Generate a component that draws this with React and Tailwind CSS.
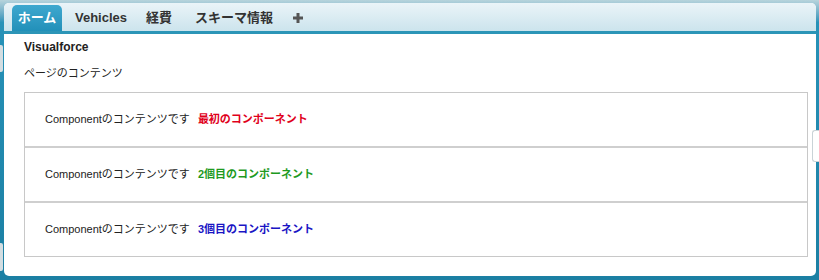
const tabs = ['Vehicles', '経費', 'スキーマ情報'];
const tabGaps = ['ml-[13px]', 'ml-[19px]', 'ml-[23px]'];

const components = [
  { label: '最初のコンポーネント', color: 'text-[#e0001b]' },
  { label: '2個目のコンポーネント', color: 'text-[#1f9a1f]' },
  { label: '3個目のコンポーネント', color: 'text-[#1a14c4]' },
];

function ComponentRow({ label, color, first }) {
  return (
    <div className={`flex items-center pl-[20px] text-[11px] text-[#222] ${first ? 'h-[53px]' : 'h-[55px] border-t-2 border-[#cfcfcf]'}`}>
      <span>Componentのコンテンツです</span>
      <span className={`ml-[8px] font-bold ${color}`}>{label}</span>
    </div>
  );
}

export default function App() {
  return (
    <div className="relative h-[280px] w-[819px] overflow-hidden bg-gradient-to-b from-[#b7d4dc] via-[#2792b8] via-[8%] to-[#1b7fa3] pt-[3px] pl-[4px] pr-[3px] font-['Liberation_Sans','Noto_Sans_CJK_JP',sans-serif]">
      <div className="h-[273px] rounded-[5px] bg-white flex flex-col overflow-hidden">
        {/* tab bar */}
        <div className="h-[31px] shrink-0 flex items-end pl-[8px] bg-gradient-to-b from-[#eaf4f8] to-[#cce4ed] border-b-[3px] border-[#2c95b7]">
          <div className="w-[50px] h-[26px] rounded-t-[5px] bg-gradient-to-b from-[#3ea8cf] to-[#2190b9] flex items-center justify-center text-[13px] font-bold text-white">
            ホーム
          </div>
          {tabs.map((t, i) => (
            <div key={t} className={`${tabGaps[i]} h-[26px] flex items-center text-[13px] font-bold text-[#333]`}>
              {t}
            </div>
          ))}
          <div className="ml-[20px] h-[26px] flex items-center">
            <svg width="10" height="10" viewBox="0 0 10 10">
              <path d="M3.5 0h3v3.5H10v3H6.5V10h-3V6.5H0v-3h3.5z" fill="#555" />
            </svg>
          </div>
        </div>

        {/* content */}
        <div className="pl-[20px] pr-[8px] pt-[6px]">
          <div className="text-[12px] leading-[14px] font-bold text-[#222]">Visualforce</div>
          <div className="mt-[12px] text-[11px] leading-[14px] text-[#222]">ページのコンテンツ</div>
          <div className="mt-[12px] border border-[#c8c8c8]">
            {components.map((c, i) => (
              <ComponentRow key={c.label} label={c.label} color={c.color} first={i === 0} />
            ))}
          </div>
        </div>
      </div>

      {/* sidebar handles */}
      <div className="absolute left-0 top-[45px] w-[3px] h-[27px] rounded-r-[2px] bg-[#d3dde1]" />
      <div className="absolute left-0 top-[243px] w-[3px] h-[28px] rounded-r-[2px] bg-[#d3dde1]" />
      <div className="absolute right-0 top-[130px] w-[7px] h-[32px] rounded-l-[3px] bg-white border border-r-0 border-[#c9d3d7]" />
    </div>
  );
}
